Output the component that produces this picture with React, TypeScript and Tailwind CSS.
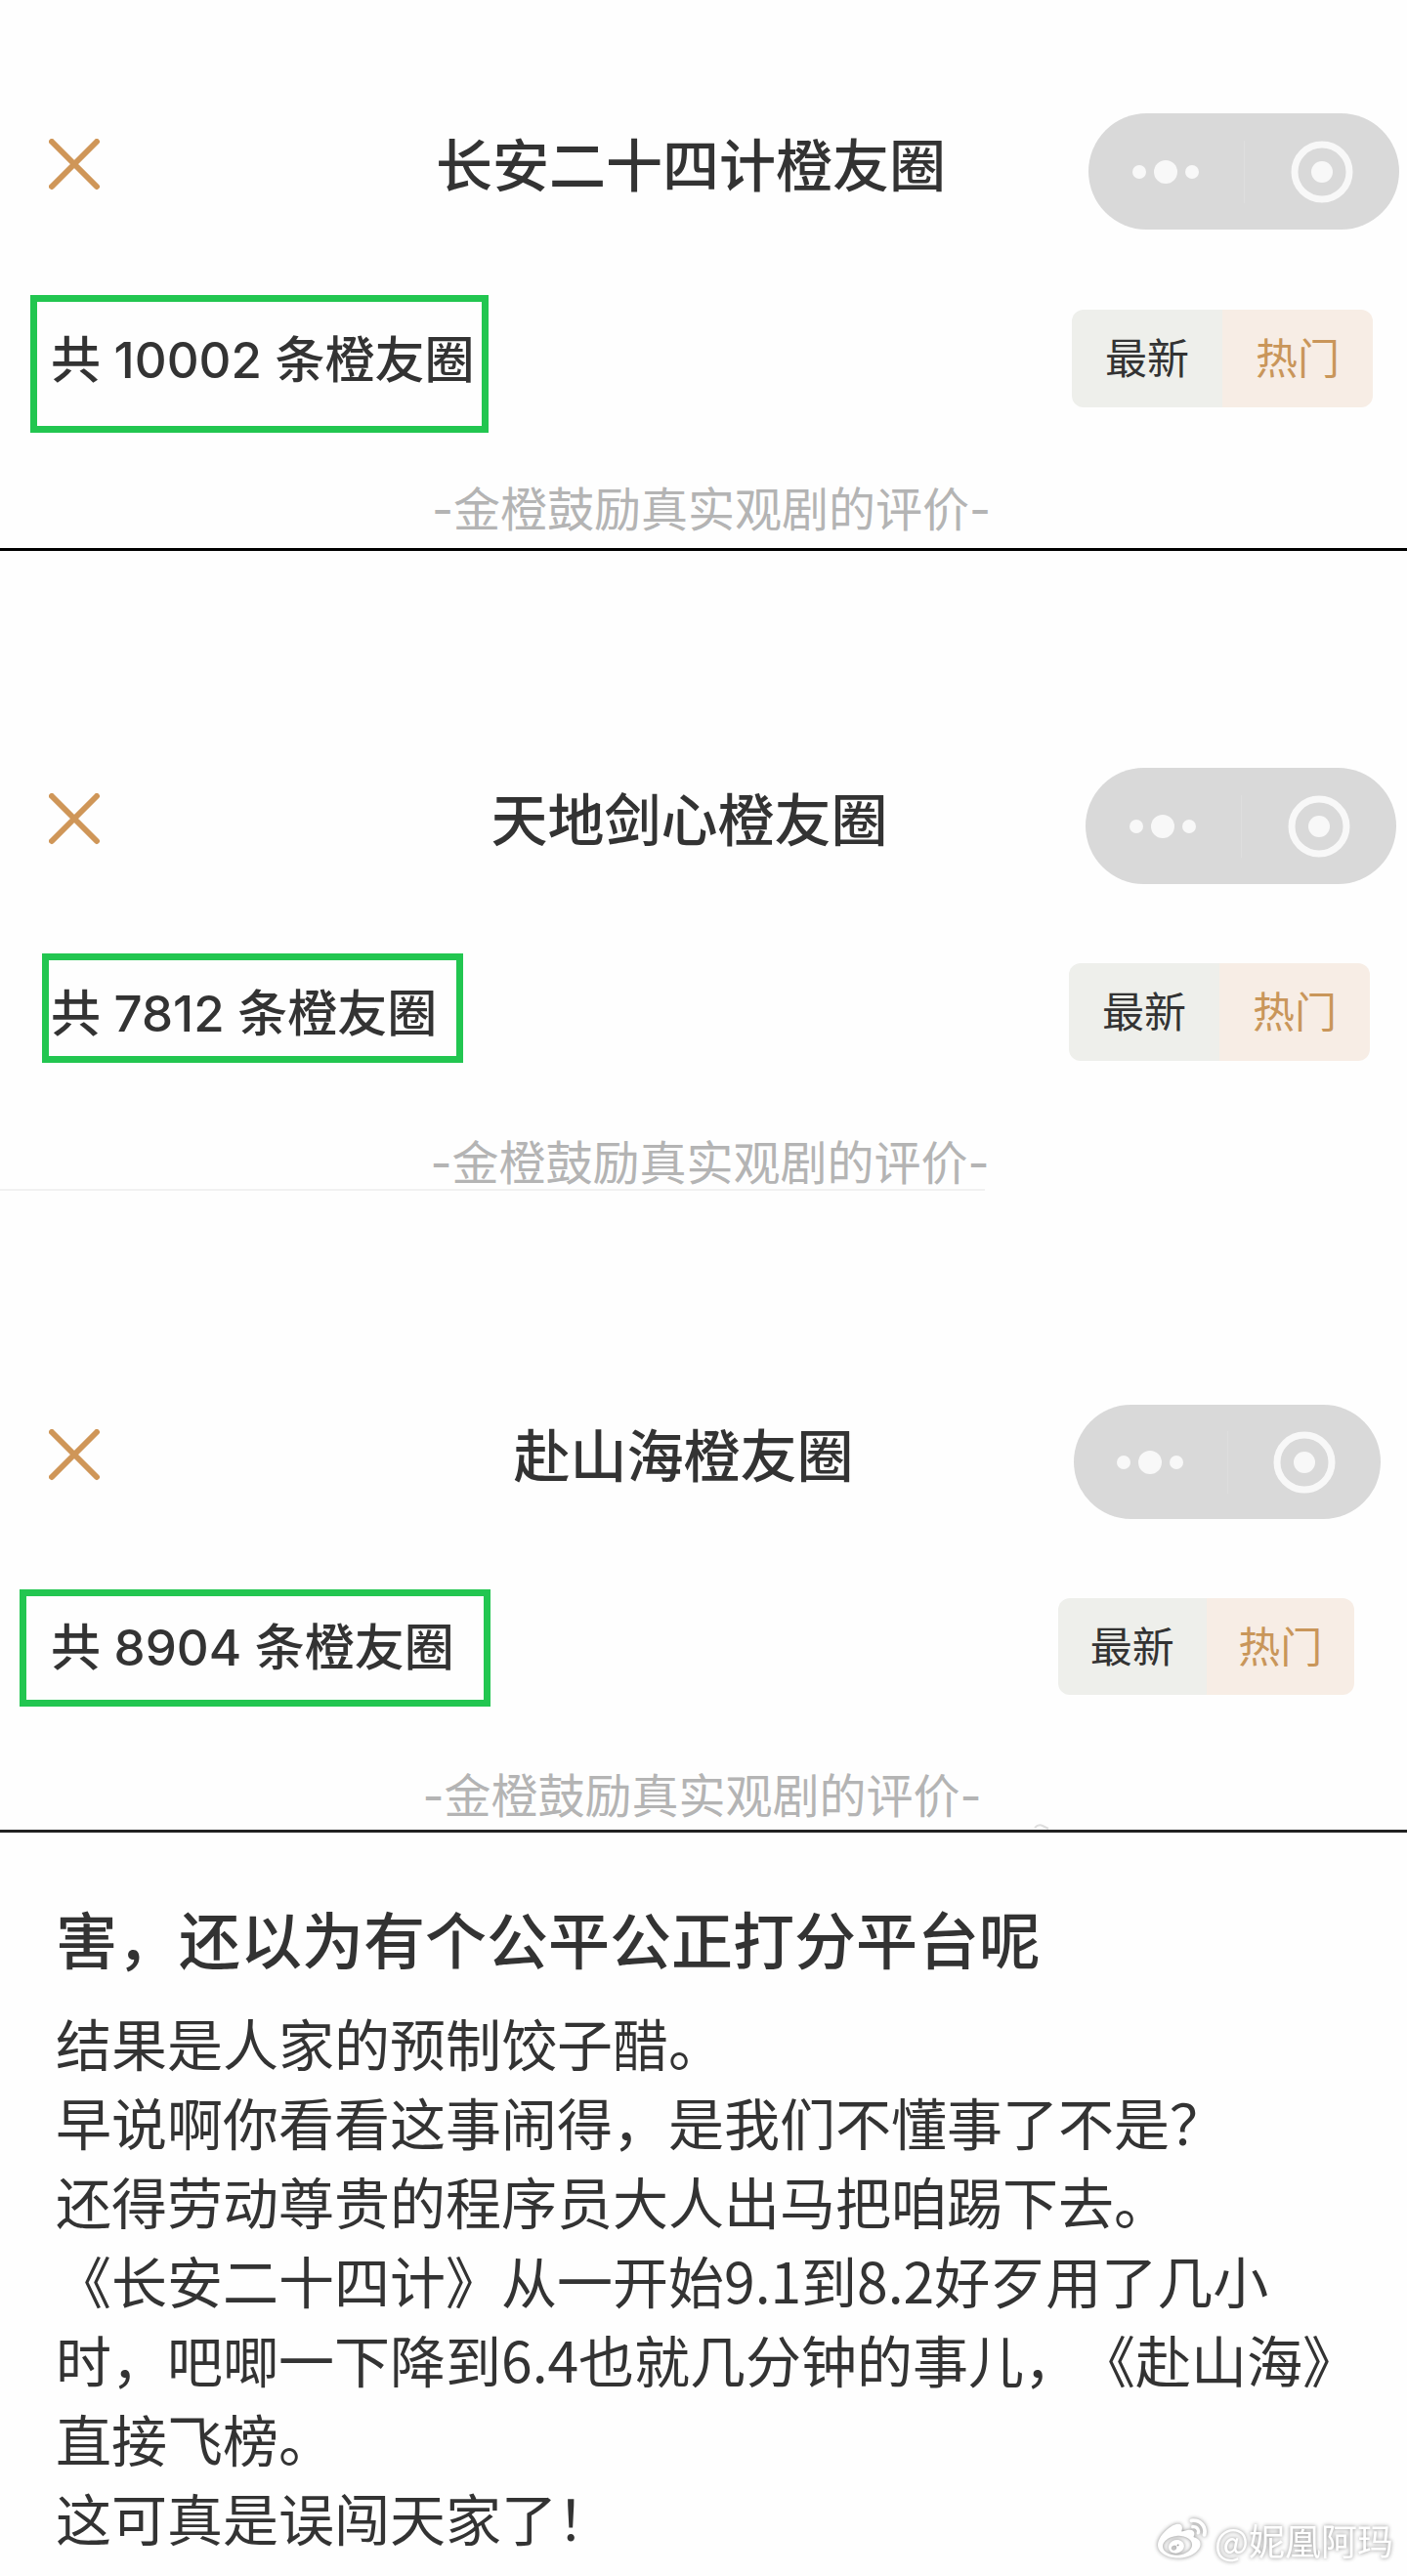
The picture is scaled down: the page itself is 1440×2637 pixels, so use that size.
import { FaWeibo } from "react-icons/fa";

type CircleProps = {
  title: string
  count: number
  section: string
  capsule: string
  box: string
  tabs: string
  note: string
}

const circles: CircleProps[] = [
  {
    title: "长安二十四计橙友圈",
    count: 10002,
    section: "pt-[116px] pr-2 pb-[15px] border-b-[3px] border-black",
    capsule: "w-[318px] h-[119px]",
    box: "mt-[67px] ml-[31px] w-[469px] pt-[34px] pb-[41px] pl-[14px]",
    tabs: "mt-[82px] w-[308px] h-[100px]",
    note: "mt-[55px]",
  },
  {
    title: "天地剑心橙友圈",
    count: 7812,
    section: "pt-[222px] pr-[11px] pb-[2px]",
    capsule: "w-[318px] h-[119px]",
    box: "mt-[71px] ml-[43px] w-[431px] pt-[29px] pb-[17px] pl-[2px]",
    tabs: "mt-[81px] w-[308px] h-[100px]",
    note: "mt-[79px]",
  },
  {
    title: "赴山海橙友圈",
    count: 8904,
    section: "pt-[219px] pr-[27px] pb-[10px] border-b-[3px] border-[#222]",
    capsule: "w-[314px] h-[117px]",
    box: "mt-[72px] ml-[20px] w-[482px] pt-[27px] pb-[27px] pl-[25px]",
    tabs: "mt-[81px] w-[303px] h-[99px]",
    note: "mt-[68px]",
  },
]

function Capsule({ size }: { size: string }) {
  return (
    <div className={`flex items-center rounded-full bg-[#d9d9d9] ${size}`}>
      <button type="button" aria-label="更多" className="flex h-full flex-1 items-center justify-center">
        <svg width="70" height="26" viewBox="0 0 70 26" fill="#f8f8f8">
          <circle cx="8" cy="13" r="7" />
          <circle cx="35" cy="13" r="12" />
          <circle cx="62" cy="13" r="7" />
        </svg>
      </button>
      <div className="h-16 w-px bg-[#dedede]" />
      <button type="button" aria-label="关闭小程序" className="flex h-full flex-1 items-center justify-center">
        <svg width="64" height="64" viewBox="0 0 64 64">
          <circle cx="32" cy="32" r="28" fill="none" stroke="#f8f8f8" strokeWidth="7" />
          <circle cx="32" cy="32" r="11" fill="#f8f8f8" />
        </svg>
      </button>
    </div>
  )
}

function Circle({ title, count, section, capsule, box, tabs, note }: CircleProps) {
  return (
    <section className={section}>
      <header className="flex items-center">
        <div className="w-[300px] pb-[14px] pl-[50px]">
          <button type="button" aria-label="返回" className="block">
            <svg width="53" height="53" viewBox="0 0 53 53" stroke="#cf9658" strokeWidth="6" strokeLinecap="round">
              <path d="M3 3 L49 49 M49 3 L3 49" />
            </svg>
          </button>
        </div>
        <h2 className="flex-1 pb-3 text-center text-[58px] leading-[58px] font-medium whitespace-nowrap">{title}</h2>
        <Capsule size={capsule} />
      </header>

      <div className="flex items-start justify-between">
        <p className={`border-[7px] border-[#22c650] text-[51px] leading-[52px] font-medium whitespace-nowrap ${box}`}>
          共 {count} 条橙友圈
        </p>
        <div className={`mr-[27px] flex overflow-hidden rounded-xl text-[43px] leading-[44px] ${tabs}`}>
          <button type="button" className="flex-1 bg-[#eeefeb]">最新</button>
          <button type="button" className="flex-1 bg-[#f7ede5] text-[#c9965a]">热门</button>
        </div>
      </div>

      <p className={`pl-6 text-center text-[48px] leading-[48px] text-[#b4b4b4] ${note}`}>-金橙鼓励真实观剧的评价-</p>
    </section>
  )
}

function App() {
  return (
    <main className="relative bg-[#fefefe] font-['Inter','Noto_Sans_CJK_SC',sans-serif] text-[#333]">
      <Circle {...circles[0]} />
      <Circle {...circles[1]} />
      <div className="h-[2px] w-[70%] bg-[#f1f1f1]" />
      <div className="relative">
        <Circle {...circles[2]} />
        <svg className="absolute right-[366px] bottom-[3px]" width="16" height="6" viewBox="0 0 16 6" fill="none" stroke="#ddd" strokeWidth="2">
          <path d="M1 4 Q5 0 9 2 T15 5" />
        </svg>
      </div>

      <article className="pt-[75px] pr-10 pb-[20px] pl-[57px] font-['Noto_Sans_CJK_SC',sans-serif] [text-spacing-trim:space-all]">
        <h1 className="text-[63px] leading-[64px] font-medium">害，还以为有个公平公正打分平台呢</h1>
        <div className="mt-[35px] text-[57px] leading-[81px]">
          <p>结果是人家的预制饺子醋。</p>
          <p>早说啊你看看这事闹得，是我们不懂事了不是？</p>
          <p>还得劳动尊贵的程序员大人出马把咱踢下去。</p>
          <p>《长安二十四计》从一开始9.1到8.2好歹用了几小时，吧唧一下降到6.4也就几分钟的事儿，《赴山海》直接飞榜。</p>
          <p>这可真是误闯天家了！</p>
        </div>
      </article>

      {/* Weibo watermark */}
      <div className="absolute right-[14px] bottom-[12px] flex items-center gap-2 text-[37px] leading-[40px] text-white drop-shadow-[0_0_2px_#888]">
        <FaWeibo className="h-[50px] w-[50px]" />
        <span className="font-['Noto_Sans_CJK_SC',sans-serif]">@妮凰阿玛</span>
      </div>
    </main>
  )
}

export default App
